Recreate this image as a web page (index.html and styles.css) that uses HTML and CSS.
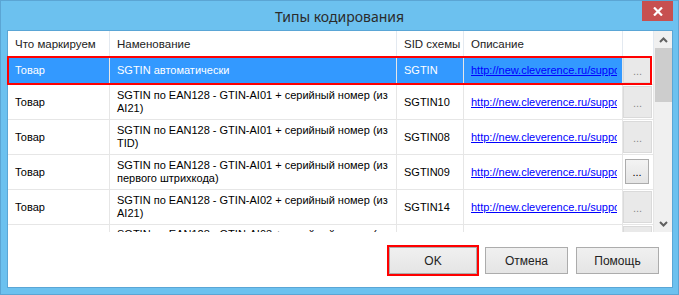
FILE: index.html
```html
<!DOCTYPE html>
<html lang="ru">
<head>
<meta charset="utf-8">
<title>Типы кодирования</title>
<link rel="stylesheet" href="styles.css">
</head>
<body>
<div class="window">
  <div class="titlebar">
    <div class="title">Типы кодирования</div>
    <div class="close">
      <svg width="10" height="9" viewBox="0 0 10 9"><path d="M1 0.5 L9 8.5 M9 0.5 L1 8.5" stroke="#fff" stroke-width="2.2"/></svg>
    </div>
  </div>
  <div class="client">
    <div class="gridview">
      <div class="table">
        <div class="hd">Что маркируем</div>
        <div class="hd">Наменование</div>
        <div class="hd">SID схемы</div>
        <div class="hd">Описание</div>
        <div class="hd"></div>

        <div class="c sel">Товар</div>
        <div class="c sel">SGTIN автоматически</div>
        <div class="c sel">SGTIN</div>
        <div class="c sel"><div class="clip"><span class="link">http://new.cleverence.ru/support/</span></div></div>
        <div class="c bc"><div class="flat">...</div></div>

        <div class="c">Товар</div>
        <div class="c">SGTIN по EAN128 - GTIN-AI01 + серийный номер (из<br>AI21)</div>
        <div class="c">SGTIN10</div>
        <div class="c"><div class="clip"><span class="link">http://new.cleverence.ru/support/</span></div></div>
        <div class="c bc"><div class="flat">...</div></div>

        <div class="c">Товар</div>
        <div class="c">SGTIN по EAN128 - GTIN-AI01 + серийный номер (из<br>TID)</div>
        <div class="c">SGTIN08</div>
        <div class="c"><div class="clip"><span class="link">http://new.cleverence.ru/support/</span></div></div>
        <div class="c bc"><div class="flat">...</div></div>

        <div class="c">Товар</div>
        <div class="c">SGTIN по EAN128 - GTIN-AI01 + серийный номер (из<br>первого штрихкода)</div>
        <div class="c">SGTIN09</div>
        <div class="c"><div class="clip"><span class="link">http://new.cleverence.ru/support/</span></div></div>
        <div class="c bc"><div class="raised">...</div></div>

        <div class="c">Товар</div>
        <div class="c">SGTIN по EAN128 - GTIN-AI02 + серийный номер (из<br>AI21)</div>
        <div class="c">SGTIN14</div>
        <div class="c"><div class="clip"><span class="link">http://new.cleverence.ru/support/</span></div></div>
        <div class="c bc"><div class="flat">...</div></div>

        <div class="c last">Товар</div>
        <div class="c last top">SGTIN по EAN128 - GTIN-AI03 + серийный номер (из<br>AI21)</div>
        <div class="c last">SGTIN15</div>
        <div class="c last"><div class="clip"><span class="link">http://new.cleverence.ru/support/</span></div></div>
        <div class="c bc last"><div class="flat">...</div></div>
      </div>
      <div class="scrollbar">
        <div class="arrow"><svg width="9" height="6" viewBox="0 0 9 6"><path d="M1 5 L4.5 1.5 L8 5" fill="none" stroke="#606060" stroke-width="2"/></svg></div>
        <div class="thumb"></div>
        <div class="track"></div>
        <div class="arrow"><svg width="9" height="6" viewBox="0 0 9 6"><path d="M1 1 L4.5 4.5 L8 1" fill="none" stroke="#606060" stroke-width="2"/></svg></div>
      </div>
      <div class="mark-row"></div>
    </div>
    <div class="buttons">
      <div class="btn ok">OK</div>
      <div class="btn">Отмена</div>
      <div class="btn">Помощь</div>
    </div>
  </div>
</div>
</body>
</html>
```
FILE: styles.css
```css
* { box-sizing: border-box; }
body { margin: 0; background: #fff; }

.window {
  width: 679px;
  height: 295px;
  border: 1px solid #5ba5d4;
  background: #6cc1ef;
  display: flex;
  flex-direction: column;
  font-family: "Liberation Sans", Arial, sans-serif;
}

.titlebar {
  height: 29px;
  display: grid;
  grid-template-columns: 1fr auto 1fr;
  align-items: start;
}
.title {
  grid-column: 2;
  font-family: "Noto Sans", sans-serif;
  font-size: 14px;
  line-height: 29px;
  color: #2b2b2b;
  margin-top: 1px;
}
.close {
  grid-column: 3;
  justify-self: end;
  width: 31px;
  height: 20px;
  margin-right: 5px;
  background: #c75050;
  display: flex;
  align-items: center;
  justify-content: center;
}

.client {
  margin: 0 5px 6px 6px;
  height: 258px;
  border: 1px solid #5aa6d6;
  background: #fff;
  display: flex;
  flex-direction: column;
}

.gridview {
  position: relative;
  height: 201px;
  display: flex;
}
.table {
  width: 646px;
  height: 201px;
  overflow: hidden;
  display: grid;
  grid-template-columns: 102px 287px 67px 159px 31px;
  grid-template-rows: 25px 29px 35px 35px 35px 35px 35px;
  align-content: start;
}
.hd {
  font-size: 11.5px;
  color: #222;
  padding-left: 7px;
  border-right: 1px solid #e3e9f0;
  display: flex;
  align-items: center;
  white-space: nowrap;
}
.c {
  font-size: 11px;
  line-height: 13px;
  color: #000;
  padding-left: 7px;
  border-right: 1px solid #e6e6e6;
  border-bottom: 1px solid #e6e6e6;
  display: flex;
  align-items: center;
  white-space: nowrap;
}
.c.last { align-items: flex-start; padding-top: 14px; }
.c.last.top { padding-top: 3px; }
.c.sel { background: #3399ff; color: #fff; }
.clip { width: 146px; overflow: hidden; }
.link { color: #0000ff; text-decoration: underline; }

.c.bc {
  padding: 1px 1px 1px 0;
  align-items: stretch;
}
.c.bc.last { padding-top: 1px; }
.flat {
  flex: 1;
  background: #e9e9e9;
  border: 1px solid #dadada;
  color: #8a8a8a;
  font-size: 11px;
  display: flex;
  align-items: center;
  justify-content: center;
  padding-top: 2px;
}
.raised {
  flex: 1;
  margin: 3px 3px 4px 2px;
  background: linear-gradient(#f3f3f3, #e4e4e4);
  border: 1px solid #acacac;
  color: #000;
  font-size: 11px;
  display: flex;
  align-items: center;
  justify-content: center;
  padding-top: 2px;
}

.scrollbar {
  width: 18px;
  display: flex;
  flex-direction: column;
  background: #f0f0f0;
}
.arrow {
  height: 17px;
  display: flex;
  align-items: center;
  justify-content: center;
}
.thumb {
  height: 54px;
  margin-left: 1px;
  background: #cdcdcd;
}
.track { flex: 1; }

.mark-row {
  position: absolute;
  left: -1px;
  top: 25px;
  width: 645px;
  height: 29px;
  border: 2px solid #ff0000;
}

.buttons {
  display: flex;
  justify-content: flex-end;
  gap: 8px;
  padding: 15px 13px 0 0;
}
.btn {
  width: 83px;
  height: 27px;
  border: 1px solid #acacac;
  background: linear-gradient(#f0f0f0, #e5e5e5);
  font-size: 12px;
  font-weight: 400;
  color: #222;
  display: flex;
  align-items: center;
  justify-content: center;
}
.btn.ok {
  width: 88px;
  position: relative;
}
.btn.ok::after {
  content: "";
  position: absolute;
  inset: -3px;
  border: 2px solid #ff0000;
}
```
